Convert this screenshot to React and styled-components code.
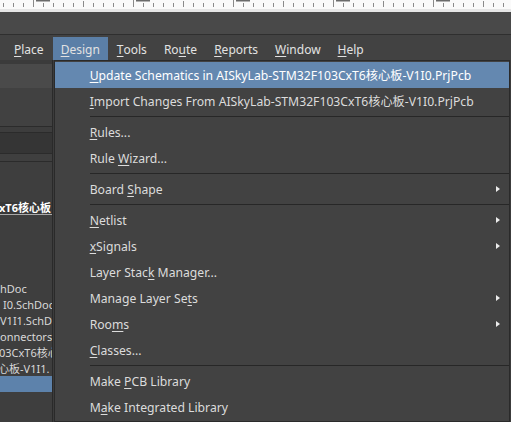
import React from "react";
import styled, { createGlobalStyle } from "styled-components";

const Global = createGlobalStyle`
  html, body { margin: 0; padding: 0; background: #3e3e3e; overflow: hidden; }
  body { font-family: "Noto Sans", "Noto Sans CJK SC", sans-serif; }
  #root { width: 511px; height: 422px; overflow: hidden; }
`;

const Page = styled.div`
  width: 511px;
  height: 422px;
  display: flex;
  flex-direction: column;
  background: #3e3e3e;
  overflow: hidden;
`;

const RulerBar = styled.div`
  height: 12px;
  flex: none;
  background: #e6e6e6;
  svg { display: block; }
`;

const ToolStrip = styled.div`
  height: 22px;
  flex: none;
  background: #494949;
  border-bottom: 1px solid #2f2f2f;
`;

const MenuBar = styled.div`
  height: 25px;
  flex: none;
  display: flex;
  align-items: flex-end;
  padding-left: 6px;
  background: #424242;
  position: relative;
  z-index: 5;
`;

const MenuBarItem = styled.div`
  position: relative;
  height: 23px;
  display: flex;
  align-items: center;
  padding: 1px 8px 0;
  box-sizing: border-box;
  margin-right: 1px;
  font-size: 12px;
  color: #e2e2e2;
  background: ${(p) => (p.$active ? "#5b7fa7" : "transparent")};
  white-space: nowrap;
`;

const Mn = styled.span`
  text-decoration: underline;
  text-underline-offset: 2px;
  text-decoration-thickness: 1px;
`;

const Dropdown = styled.div`
  position: absolute;
  top: 23px;
  left: 1px;
  width: 454px;
  border: 1px solid #2a2a2a;
  background: #424242;
  padding: 1px 0;
  z-index: 10;
`;

const Item = styled.div`
  height: 26px;
  display: flex;
  align-items: center;
  padding: 0 9px 0 35px;
  font-size: 12.2px;
  color: ${(p) => (p.$hot ? "#ffffff" : "#dcdcdc")};
  background: ${(p) => (p.$hot ? "#6488b0" : "transparent")};
  white-space: nowrap;
`;

const ItemLabel = styled.span`
  flex: 1;
`;

const Arrow = styled.span`
  width: 0;
  height: 0;
  border-top: 3.5px solid transparent;
  border-bottom: 3.5px solid transparent;
  border-left: 4px solid #ececec;
`;

const Separator = styled.div`
  height: 5px;
  display: flex;
  align-items: center;
  padding-left: 35px;
  &::after {
    content: "";
    flex: 1;
    height: 1px;
    background: #272727;
  }
`;

const Body = styled.div`
  flex: 1;
  display: flex;
  min-height: 0;
`;

const LeftPanel = styled.div`
  width: 52px;
  flex: none;
  border-right: 1px solid #2a2a2a;
  display: flex;
  flex-direction: column;
  overflow: hidden;
`;

const Band = styled.div`
  height: ${(p) => p.$h}px;
  flex: none;
  background: ${(p) => p.$bg};
  border-bottom: ${(p) => (p.$line ? "1px solid #2b2b2b" : "none")};
`;

const Tree = styled.div`
  flex: 1;
  background: #3e3e3e;
  padding-top: 38px;
  display: flex;
  flex-direction: column;
`;

const TreeRow = styled.div`
  height: 16px;
  flex: none;
  display: flex;
  align-items: center;
  font-size: 11px;
  color: #d8d8d8;
  white-space: nowrap;
  overflow: hidden;
  background: ${(p) => (p.$sel ? "#5d82ab" : "transparent")};
  padding-left: ${(p) => Math.max(p.$indent || 0, 0)}px;
  span { margin-left: ${(p) => Math.min(p.$indent || 0, 0)}px; }
`;

const ProjectLabel = styled.span`
  height: 12px;
  line-height: 12px;
  padding-right: 4px;
  font-weight: 700;
  color: #ffffff;
  background: #383838;
  border-bottom: 1px solid #a8a8a8;
`;

const Canvas = styled.div`
  flex: 1;
  background: #3c3c3c;
`;

function Ruler() {
  const ticks = [];
  for (let x = 3; x < 511; x += 10) {
    const major = (x - 33) % 100 === 0;
    const mid = (x - 83) % 100 === 0;
    ticks.push(
      <line
        key={x}
        x1={x + 0.5}
        x2={x + 0.5}
        y1={major ? 0 : mid ? 1 : 3}
        y2={7}
        stroke="#8a8a8a"
        strokeWidth="1"
      />
    );
  }
  return (
    <svg width="511" height="12" viewBox="0 0 511 12">
      <rect x="0" y="0" width="511" height="9" fill="#fafafa" />
      {ticks}
      {[0, 1, 2, 3, 4].map((i) => (
        <rect key={i} x={36 + i * 100} y="0" width="14" height="1.5" fill="#6a6a6a" />
      ))}
    </svg>
  );
}

const label = (text, idx) =>
  idx < 0 ? (
    text
  ) : (
    <>
      {text.slice(0, idx)}
      <Mn>{text[idx]}</Mn>
      {text.slice(idx + 1)}
    </>
  );

const menu = [
  { t: "Update Schematics in AISkyLab-STM32F103CxT6核心板-V1I0.PrjPcb", u: 0, hot: true },
  { t: "Import Changes From AISkyLab-STM32F103CxT6核心板-V1I0.PrjPcb", u: 0 },
  { sep: true },
  { t: "Rules...", u: 0 },
  { t: "Rule Wizard...", u: 5 },
  { sep: true },
  { t: "Board Shape", u: 6, sub: true },
  { sep: true },
  { t: "Netlist", u: 0, sub: true },
  { t: "xSignals", u: 0, sub: true },
  { t: "Layer Stack Manager...", u: 10 },
  { t: "Manage Layer Sets", u: 15, sub: true },
  { t: "Rooms", u: 3, sub: true },
  { t: "Classes...", u: 0 },
  { sep: true },
  { t: "Make PCB Library", u: 5 },
  { t: "Make Integrated Library", u: 1 },
];

const bar = [
  ["Place", 0],
  ["Design", 0],
  ["Tools", 0],
  ["Route", 2],
  ["Reports", 0],
  ["Window", 0],
  ["Help", 0],
];

const treeRows = [
  { text: "xT6核心板", indent: -1, project: true },
  { text: "" },
  { text: "" },
  { text: "" },
  { text: "" },
  { text: "hDoc", indent: 0 },
  { text: "I0.SchDoc", indent: 3 },
  { text: "V1I1.SchD", indent: 0 },
  { text: "onnectors", indent: 0 },
  { text: "03CxT6核心", indent: -1 },
  { text: "心板-V1I1.", indent: -2 },
  { text: "", sel: true },
];

export default function App() {
  return (
    <Page>
      <Global />
      <RulerBar>
        <Ruler />
      </RulerBar>
      <ToolStrip />
      <MenuBar>
        {bar.map(([t, u]) => (
          <MenuBarItem key={t} $active={t === "Design"}>
            {label(t, u)}
            {t === "Design" && (
              <Dropdown>
                {menu.map((m, i) =>
                  m.sep ? (
                    <Separator key={i} />
                  ) : (
                    <Item key={i} $hot={m.hot}>
                      <ItemLabel>{label(m.t, m.u)}</ItemLabel>
                      {m.sub && <Arrow />}
                    </Item>
                  )
                )}
              </Dropdown>
            )}
          </MenuBarItem>
        ))}
      </MenuBar>
      <Body>
        <LeftPanel>
          <Band $h={4} $bg="#3b3b3b" />
          <Band $h={24} $bg="#4a4a4a" />
          <Band $h={38} $bg="#414141" $line />
          <Band $h={5} $bg="#3d3d3d" $line />
          <Band $h={20} $bg="#353535" $line />
          <Band $h={7} $bg="#3f3f3f" $line />
          <Tree>
            {treeRows.map((r, i) => (
              <TreeRow key={i} $indent={r.indent} $sel={r.sel}>
                {r.project ? (
                  <ProjectLabel>{r.text}</ProjectLabel>
                ) : (
                  <span>{r.text}</span>
                )}
              </TreeRow>
            ))}
          </Tree>
        </LeftPanel>
        <Canvas />
      </Body>
    </Page>
  );
}
